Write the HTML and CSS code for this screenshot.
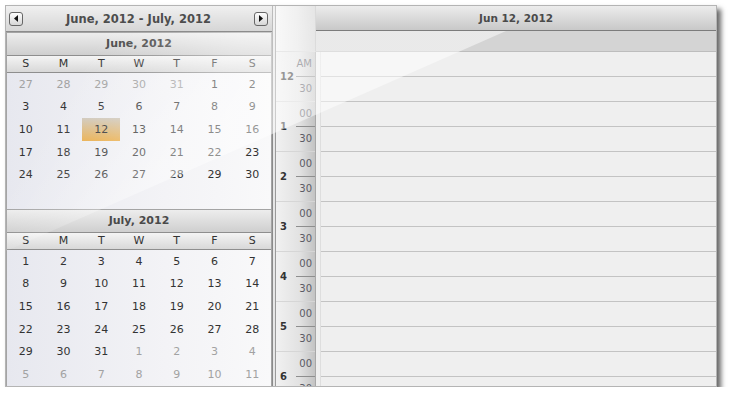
FILE: index.html
```html
<!DOCTYPE html>
<html lang="en">
<head>
  <meta charset="UTF-8" />
  <title>Scheduler</title>
  <link rel="stylesheet" href="styles.css">
</head>
<body>
  <div class="widget">
    <!-- Month calendars -->
    <div class="cal-panel">
      <div class="nav">
        <div class="nav-btn"><svg width="4" height="7" viewBox="0 0 4 7"><path d="M4 0V7L0 3.5Z"/></svg></div>
        <div class="nav-title">June, 2012 - July, 2012</div>
        <div class="nav-btn"><svg width="4" height="7" viewBox="0 0 4 7"><path d="M0 0V7L4 3.5Z"/></svg></div>
      </div>

      <div class="month">
        <div class="month-title">June, 2012</div>
        <div class="day-names"><span>S</span><span>M</span><span>T</span><span>W</span><span>T</span><span>F</span><span>S</span></div>
        <div class="dates">
          <span class="other">27</span><span class="other">28</span><span class="other">29</span><span class="other">30</span><span class="other">31</span><span>1</span><span>2</span>
          <span>3</span><span>4</span><span>5</span><span>6</span><span>7</span><span>8</span><span>9</span>
          <span>10</span><span>11</span><span class="today">12</span><span>13</span><span>14</span><span>15</span><span>16</span>
          <span>17</span><span>18</span><span>19</span><span>20</span><span>21</span><span>22</span><span>23</span>
          <span>24</span><span>25</span><span>26</span><span>27</span><span>28</span><span>29</span><span>30</span>
        </div>
      </div>

      <div class="month">
        <div class="month-title">July, 2012</div>
        <div class="day-names"><span>S</span><span>M</span><span>T</span><span>W</span><span>T</span><span>F</span><span>S</span></div>
        <div class="dates">
          <span>1</span><span>2</span><span>3</span><span>4</span><span>5</span><span>6</span><span>7</span>
          <span>8</span><span>9</span><span>10</span><span>11</span><span>12</span><span>13</span><span>14</span>
          <span>15</span><span>16</span><span>17</span><span>18</span><span>19</span><span>20</span><span>21</span>
          <span>22</span><span>23</span><span>24</span><span>25</span><span>26</span><span>27</span><span>28</span>
          <span>29</span><span>30</span><span>31</span><span class="other">1</span><span class="other">2</span><span class="other">3</span><span class="other">4</span>
          <span class="other">5</span><span class="other">6</span><span class="other">7</span><span class="other">8</span><span class="other">9</span><span class="other">10</span><span class="other">11</span>
        </div>
      </div>
    </div>

    <div class="splitter"></div>

    <!-- Day view -->
    <div class="sched">
      <div class="sched-head">
        <div class="corner"></div>
        <div class="day-head">
          <div class="day-title">Jun 12, 2012</div>
          <div class="all-day"></div>
        </div>
      </div>
      <div class="sched-body">
        <div class="times">
          <div class="hour"><span class="hr">12</span><div class="mins"><span class="m">AM</span><span class="m half">30</span></div></div>
          <div class="hour"><span class="hr">1</span><div class="mins"><span class="m">00</span><span class="m half">30</span></div></div>
          <div class="hour"><span class="hr">2</span><div class="mins"><span class="m">00</span><span class="m half">30</span></div></div>
          <div class="hour"><span class="hr">3</span><div class="mins"><span class="m">00</span><span class="m half">30</span></div></div>
          <div class="hour"><span class="hr">4</span><div class="mins"><span class="m">00</span><span class="m half">30</span></div></div>
          <div class="hour"><span class="hr">5</span><div class="mins"><span class="m">00</span><span class="m half">30</span></div></div>
          <div class="hour"><span class="hr">6</span><div class="mins"><span class="m">00</span><span class="m half">30</span></div></div>
        </div>
        <div class="day-col">
          <div class="slots">
            <div class="slot"></div><div class="slot"></div><div class="slot"></div><div class="slot"></div>
            <div class="slot"></div><div class="slot"></div><div class="slot"></div><div class="slot"></div>
            <div class="slot"></div><div class="slot"></div><div class="slot"></div><div class="slot"></div>
            <div class="slot"></div><div class="slot"></div>
          </div>
        </div>
      </div>
    </div>

    <!-- glass sheen over the whole control -->
    <svg class="gloss" width="710" height="380">
      <defs>
        <linearGradient id="sheen" gradientUnits="userSpaceOnUse" x1="250" y1="135" x2="60" y2="20">
          <stop offset="0" stop-color="#fff" stop-opacity="0.5"/>
          <stop offset="0.3" stop-color="#fff" stop-opacity="0.4"/>
          <stop offset="0.6" stop-color="#fff" stop-opacity="0.15"/>
          <stop offset="0.85" stop-color="#fff" stop-opacity="0"/>
        </linearGradient>
      </defs>
      <path d="M0 26H266V0H310V25H500L0 245Z" fill="url(#sheen)"/>
    </svg>
  </div>
</body>
</html>
```

FILE: styles.css
```css
html, body {
  margin: 0;
  padding: 0;
  background: #FFFFFF;
  font-family: "DejaVu Sans", Verdana, sans-serif;
  color: #333333;
}
.widget {
  margin: 5px 0 0 5px;
  width: 712px;
  height: 382px;
  box-sizing: border-box;
  border: 1px solid #B4B4B4;
  display: flex;
  position: relative;
  overflow: hidden;
  box-shadow: 4px 4px 5px rgba(0,0,0,0.6);
  background: #EFEFEF;
}
.gloss {
  position: absolute;
  top: 0;
  left: 0;
  pointer-events: none;
}

/* Calendar panel */
.cal-panel {
  width: 267px;
  flex-shrink: 0;
  box-sizing: border-box;
  border-right: 1px solid #8A8A8A;
  display: flex;
  flex-direction: column;
  overflow: hidden;
  background: #F2F2F5;
}
.nav {
  height: 26px;
  box-sizing: border-box;
  border-bottom: 1px solid #8C8C8C;
  background: linear-gradient(#F0F0F0, #D6D6D6);
  display: flex;
  align-items: center;
  justify-content: space-between;
  padding: 0 4px 0 3px;
  flex-shrink: 0;
}
.nav-title {
  font-size: 11.5px;
  font-weight: 700;
  color: #4D4D4D;
}
.nav-btn {
  width: 14px;
  height: 14px;
  box-sizing: border-box;
  border: 1px solid #666666;
  border-radius: 3px;
  background: linear-gradient(#FDFDFD, #D6D6D6);
  display: flex;
  align-items: center;
  justify-content: center;
}
.nav-btn svg {
  fill: #111111;
}
.month {
  border: 1px solid #A4A4A4;
  flex-shrink: 0;
}
.month + .month {
  border-top: none;
}
.month-title {
  height: 22px;
  line-height: 22px;
  border-bottom: 1px solid #8E8E8E;
  background: linear-gradient(#EDEDED, #CFCFCF);
  text-align: center;
  font-size: 11px;
  font-weight: 700;
  color: #4A4A4A;
}
.day-names {
  height: 16px;
  border-bottom: 1px solid #8E8E8E;
  background: linear-gradient(#F4F4F4, #D8D8D8);
  display: grid;
  grid-template-columns: repeat(7, 1fr);
  font-size: 11px;
  line-height: 16px;
  text-align: center;
  color: #333333;
}
.dates {
  height: 136px;
  display: grid;
  grid-template-columns: repeat(7, 1fr);
  grid-auto-rows: 22.67px;
  align-content: start;
  background: linear-gradient(90deg, #E7E8EF, #F3F3F6 60%, #F9F9FA);
  font-size: 11px;
  color: #333333;
}
.dates span {
  display: flex;
  align-items: center;
  justify-content: center;
}
.dates .other {
  color: #A2A2A2;
}
.dates .today {
  background: linear-gradient(#CFC8BC, #E9AC48);
}

.splitter {
  width: 3px;
  flex-shrink: 0;
  box-sizing: border-box;
  background: #E6E6E6;
  border-right: 1px solid #9A9A9A;
}

/* Day view */
.sched {
  flex: 1;
  display: flex;
  flex-direction: column;
  overflow: hidden;
}
.sched-head {
  display: flex;
  height: 46px;
  flex-shrink: 0;
}
.corner {
  width: 40px;
  box-sizing: border-box;
  border-right: 1px solid #B8B8B8;
  border-bottom: 1px solid #D4D4D4;
  background: linear-gradient(90deg, #F4F4F4, #E4E4E4 55%, #CFCFCF);
}
.day-head {
  flex: 1;
  display: flex;
  flex-direction: column;
}
.day-title {
  height: 25px;
  box-sizing: border-box;
  border-bottom: 1px solid #7C7C7C;
  background: linear-gradient(#ECECEC, #C8C8C8);
  text-align: center;
  line-height: 24px;
  font-size: 10.5px;
  font-weight: 700;
  color: #4A4A4A;
}
.all-day {
  height: 21px;
  box-sizing: border-box;
  border-bottom: 1px solid #BDBDBD;
  background: #D4D4D4;
}
.sched-body {
  flex: 1;
  display: flex;
  overflow: hidden;
}
.times {
  width: 40px;
  flex-shrink: 0;
  box-sizing: border-box;
  border-right: 1px solid #A8A8A8;
  background: linear-gradient(90deg, #F1F1F1, #E2E2E2 60%, #C3C3C3);
}
.hour {
  height: 50px;
  box-sizing: border-box;
  border-bottom: 1px solid #D6D6D6;
  display: flex;
  align-items: center;
}
.hr {
  width: 20px;
  box-sizing: border-box;
  padding-left: 4px;
  font-size: 10px;
  font-weight: 700;
  color: #333333;
}
.mins {
  flex: 1;
  align-self: stretch;
  display: flex;
  flex-direction: column;
}
.m {
  height: 24px;
  line-height: 24px;
  text-align: right;
  padding-right: 3px;
  font-size: 10px;
  color: #5A5A64;
}
.m.half {
  height: 25px;
  box-sizing: border-box;
  border-top: 1px solid #8E8E8E;
}
.day-col {
  flex: 1;
  padding-left: 4px;
  background: #EFEFEF;
}
.slots {
  border-left: 1px solid #DEDEDE;
}
.slot {
  height: 25px;
  box-sizing: border-box;
  border-bottom: 1px solid #C3C3C3;
}
```
